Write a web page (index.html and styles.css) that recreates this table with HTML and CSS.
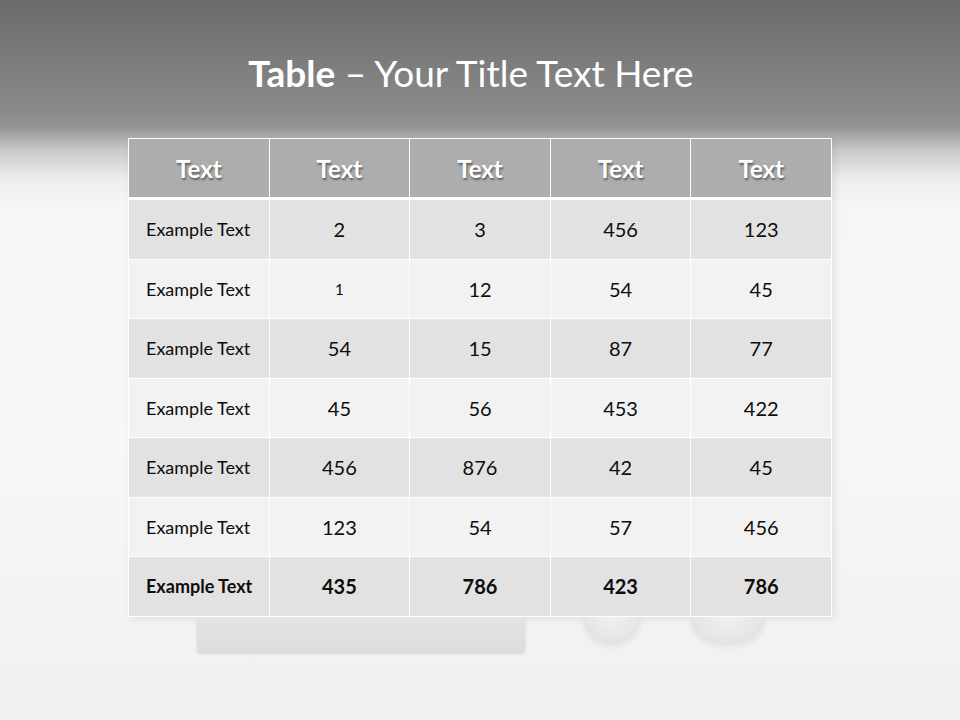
FILE: index.html
```html
<!DOCTYPE html>
<html>
<head>
<meta charset="utf-8">
<link rel="stylesheet" href="styles.css">
</head>
<body>
<div class="slide">
  <h1 class="title"><b>Table</b> – Your Title Text Here</h1>
  <table class="data">
    <thead>
      <tr><th>Text</th><th>Text</th><th>Text</th><th>Text</th><th>Text</th></tr>
    </thead>
    <tbody>
      <tr class="odd"><td class="label">Example Text</td><td>2</td><td>3</td><td>456</td><td>123</td></tr>
      <tr class="even"><td class="label">Example Text</td><td class="small">1</td><td>12</td><td>54</td><td>45</td></tr>
      <tr class="odd"><td class="label">Example Text</td><td>54</td><td>15</td><td>87</td><td>77</td></tr>
      <tr class="even"><td class="label">Example Text</td><td>45</td><td>56</td><td>453</td><td>422</td></tr>
      <tr class="odd"><td class="label">Example Text</td><td>456</td><td>876</td><td>42</td><td>45</td></tr>
      <tr class="even"><td class="label">Example Text</td><td>123</td><td>54</td><td>57</td><td>456</td></tr>
      <tr class="odd total"><td class="label">Example Text</td><td>435</td><td>786</td><td>423</td><td>786</td></tr>
    </tbody>
  </table>
  <div class="figure">
    <div class="box"></div>
    <div class="foot foot-left"></div>
    <div class="foot foot-right"></div>
  </div>
</div>
</body>
</html>
```

FILE: styles.css
```css
html, body {
  margin: 0;
  padding: 0;
}
body {
  width: 960px;
  height: 720px;
  overflow: hidden;
  font-family: Lato, "Open Sans", sans-serif;
  background: linear-gradient(to bottom,
    #6a6a6a 0px,
    #8d8d8d 118px,
    #979797 128px,
    #c9c9c9 150px,
    #ececec 178px,
    #f6f6f6 205px,
    #f7f7f7 450px,
    #f0f0f0 720px);
}
.slide {
  width: 960px;
  height: 720px;
  display: flex;
  flex-direction: column;
}
.title {
  margin: 0;
  height: 138px;
  box-sizing: border-box;
  padding-top: 51px;
  padding-right: 18px;
  text-align: center;
  font-size: 37px;
  line-height: 44px;
  font-weight: 400;
  color: #ffffff;
}
.title b {
  font-weight: 700;
}
.data {
  margin-left: 128px;
  width: 704px;
  border-collapse: collapse;
  table-layout: fixed;
  border: 1px solid #ffffff;
  box-shadow: 3px 2px 8px rgba(0, 0, 0, 0.08);
}
.data th, .data td {
  border: 1px solid #ffffff;
  text-align: center;
  padding: 0;
}
.data th {
  background: #adadad;
  height: 58px;
  color: #ffffff;
  font-size: 24px;
  font-weight: 700;
  text-shadow: 1px 2px 2px rgba(0, 0, 0, 0.45);
  border-bottom: 3px solid #ffffff;
}
.data td {
  height: 58.5px;
  font-size: 20px;
  color: #0d0d0d;
}
.data td.label {
  text-align: left;
  padding-left: 17px;
  font-size: 18px;
}
.data td.small {
  font-size: 15px;
}
.odd td {
  background: #e2e2e2;
}
.even td {
  background: #f2f2f2;
}
.total td {
  font-weight: 700;
}
.figure {
  display: flex;
  align-items: flex-start;
  margin-top: 0;
  height: 40px;
}
.box {
  margin-left: 197px;
  width: 328px;
  height: 35px;
  background: linear-gradient(to bottom, #e4e4e4, #dcdcdc);
  border-radius: 0 0 3px 3px;
  box-shadow: 0 2px 3px rgba(0, 0, 0, 0.12);
}
.foot {
  height: 26px;
  background: radial-gradient(ellipse at 50% 0%, #f0f0f0 0%, #e6e6e6 60%, #dadada 100%);
  border-radius: 0 0 50% 50% / 0 0 100% 100%;
  box-shadow: 0 3px 6px rgba(0, 0, 0, 0.08);
}
.foot-left {
  margin-left: 58px;
  width: 57px;
}
.foot-right {
  margin-left: 50px;
  width: 75px;
  border-radius: 0 0 45% 45% / 0 0 100% 100%;
}
```
